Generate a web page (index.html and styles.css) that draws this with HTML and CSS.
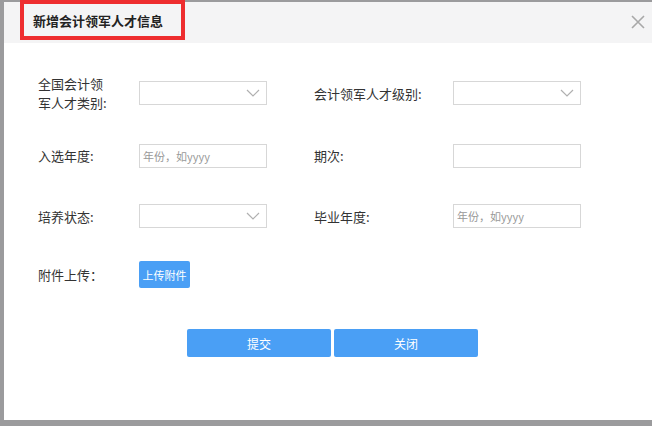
FILE: index.html
```html
<!DOCTYPE html>
<html lang="zh-CN">
<head>
    <meta charset="UTF-8">
    <title>新增会计领军人才信息</title>
    <link rel="stylesheet" href="styles.css">
</head>
<body>
    <div class="modal">
        <div class="modal-header">
            <span class="modal-title">新增会计领军人才信息</span>
            <span class="modal-close">
                <svg width="14" height="14" viewBox="0 0 14 14"><path d="M1 1 L13 13 M13 1 L1 13" stroke="#a8a8a8" stroke-width="1.6" fill="none"/></svg>
            </span>
        </div>

        <div class="modal-body">
            <div class="form-grid">
                <label class="label two-line"><span>全国会计领</span><span>军人才类别:</span></label>
                <div class="select"><svg width="14" height="8" viewBox="0 0 14 8"><path d="M1 1 L7 7 L13 1" stroke="#b0b0b0" stroke-width="1.2" fill="none"/></svg></div>
                <span></span>
                <label class="label">会计领军人才级别:</label>
                <div class="select"><svg width="14" height="8" viewBox="0 0 14 8"><path d="M1 1 L7 7 L13 1" stroke="#b0b0b0" stroke-width="1.2" fill="none"/></svg></div>

                <label class="label">入选年度:</label>
                <input class="input" type="text" placeholder="年份，如yyyy">
                <span></span>
                <label class="label">期次:</label>
                <input class="input" type="text">

                <label class="label">培养状态:</label>
                <div class="select"><svg width="14" height="8" viewBox="0 0 14 8"><path d="M1 1 L7 7 L13 1" stroke="#b0b0b0" stroke-width="1.2" fill="none"/></svg></div>
                <span></span>
                <label class="label">毕业年度:</label>
                <input class="input" type="text" placeholder="年份，如yyyy">

                <label class="label">附件上传：</label>
                <div><button class="upload-btn">上传附件</button></div>
            </div>

            <div class="actions">
                <button class="btn">提交</button>
                <button class="btn">关闭</button>
            </div>
        </div>
    </div>
</body>
</html>
```

FILE: styles.css
```css
body {
    margin: 0;
    height: 426px;
    overflow: hidden;
    background: #9b9b9d;
    font-family: "Microsoft YaHei", "Noto Sans CJK SC", sans-serif;
    color: #333;
}

.modal {
    margin: 2px 0 0 4px;
    height: 418px;
    background: #fff;
}

.modal-header {
    height: 41px;
    background: #f4f4f5;
    display: flex;
    align-items: flex-start;
    justify-content: space-between;
}

.modal-title {
    margin: -2px 0 0 16px;
    width: 148px;
    height: 32px;
    border: 4px solid #ee2d2f;
    padding-left: 9px;
    font-size: 13px;
    font-weight: bold;
    color: #222;
    box-sizing: content-box;
    display: flex;
    align-items: center;
}

.modal-close {
    margin: 8px 7px 0 0;
    height: 14px;
}

.modal-body {
    padding: 19px 0 0 34px;
}

.form-grid {
    display: grid;
    grid-template-columns: 101px 128px 47px 139px 128px;
    grid-template-rows: 62px 63px 58px 59px;
    align-items: center;
}

.label {
    font-size: 13px;
    color: #333;
    line-height: 15px;
}

.two-line {
    display: flex;
    flex-direction: column;
    gap: 4px;
    line-height: 15px;
}

.select, .input {
    box-sizing: border-box;
    width: 128px;
    height: 24px;
    border: 1px solid #d7d7d7;
    background: #fff;
}

.select {
    display: flex;
    align-items: center;
    justify-content: flex-end;
    padding-right: 6px;
}

.input {
    padding: 0 3px;
    font-family: inherit;
    font-size: 11px;
    outline: none;
}

.input::placeholder {
    color: #999;
}

.upload-btn {
    width: 51px;
    height: 27px;
    border: none;
    border-radius: 2px;
    background: #4a9ff5;
    color: #fff;
    font-family: inherit;
    font-size: 11px;
    padding: 0;
}

.actions {
    display: flex;
    gap: 3px;
    margin: 25px 0 0 149px;
}

.btn {
    width: 144px;
    height: 28px;
    border: none;
    border-radius: 2px;
    background: #4a9ff5;
    color: #fff;
    font-family: inherit;
    font-size: 12px;
}
```
